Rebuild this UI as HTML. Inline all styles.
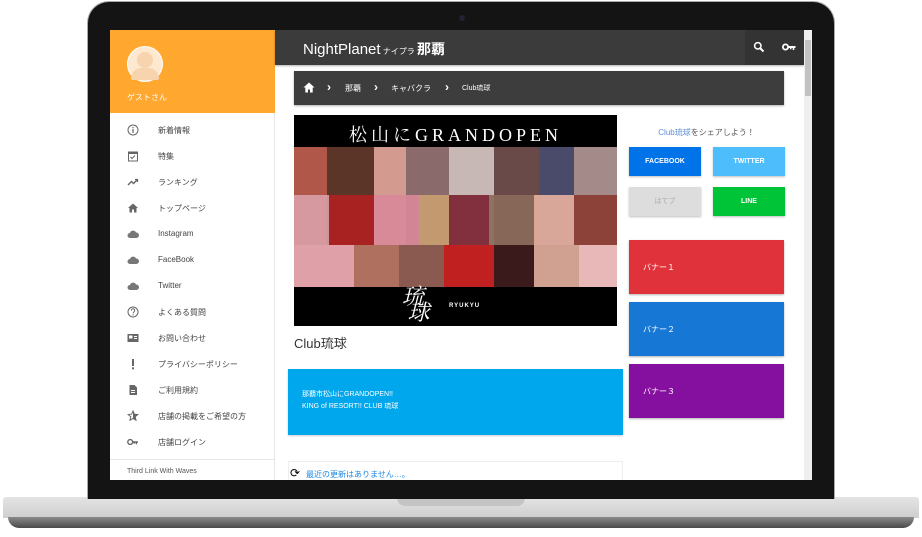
<!DOCTYPE html>
<html><head><meta charset="utf-8"><style>
*{margin:0;padding:0;box-sizing:border-box}
body{width:922px;height:537px;background:#fff;position:relative;overflow:hidden;font-family:"Liberation Sans","Noto Sans CJK JP",sans-serif}
.a{position:absolute}
.mi{position:absolute;left:0;width:165px;height:26px;font-size:8px;color:#444}
.mi span{position:absolute;left:48px;top:8px}
.mi svg{position:absolute;left:17px;top:7px;width:12px;height:12px}
.btn{position:absolute;width:72px;height:29px;color:#fff;font-size:7px;font-weight:bold;text-align:center;line-height:29px;box-shadow:0 1px 2px rgba(0,0,0,.25)}
.bn{position:absolute;left:629px;width:155px;height:54px;color:#fff;font-size:8px;padding:22px 0 0 14px;box-shadow:0 1px 2px rgba(0,0,0,.3)}
.ch{position:absolute;top:9px;font-size:12px;font-weight:bold}
</style></head><body>
<div class="a" style="left:3px;top:497px;width:916px;height:21px;background:linear-gradient(#e4e4e4,#cfcfcf);border-radius:3px 3px 0 0"></div>
<div class="a" style="left:8px;top:517px;width:906px;height:11px;background:linear-gradient(#8a8a8a,#4a4a4a);border-radius:0 0 40px 40px"></div>
<div class="a" style="left:397px;top:497px;width:128px;height:9px;background:#c4c4c4;border-radius:0 0 8px 8px"></div>
<div class="a" style="left:87px;top:1px;width:748px;height:498px;background:#141414;border-radius:22px 22px 0 0;border:1px solid #aaa;border-bottom:none"></div>
<div class="a" style="left:459px;top:15px;width:6px;height:6px;border-radius:50%;background:#223"></div>
<div class="a" style="left:110px;top:30px;width:702px;height:450px;background:#fff;overflow:hidden">
 <div class="a" style="left:0;top:0;width:165px;height:450px;background:#fff;border-right:1px solid #e6e6e6">
  <div class="a" style="left:0;top:0;width:165px;height:83px;background:#ffa72e"></div>
  <div class="a" style="left:17px;top:16px;width:36px;height:36px;border-radius:50%;background:#fde9d0;border:1px solid #fff"></div>
  <div class="a" style="left:27px;top:22px;width:16px;height:16px;border-radius:50%;background:#f7d3ae"></div>
  <div class="a" style="left:21px;top:38px;width:28px;height:12px;border-radius:12px 12px 2px 2px;background:#f7d3ae"></div>
  <div class="a" style="left:17px;top:62px;font-size:8px;color:#fff">ゲストさん</div>
  <div class="mi" style="top:87px"><svg viewBox="0 0 12 12"><circle cx="6" cy="6" r="5" fill="none" stroke="#666"/><rect x="5.4" y="5" width="1.2" height="4" fill="#666"/><rect x="5.4" y="3" width="1.2" height="1.2" fill="#666"/></svg><span>新着情報</span></div>
  <div class="mi" style="top:113px"><svg viewBox="0 0 12 12"><rect x="1.5" y="2" width="9" height="9" fill="none" stroke="#666"/><rect x="1.5" y="2" width="9" height="2" fill="#666"/><path d="M3.5 7l1.5 1.5 3-3" fill="none" stroke="#666"/></svg><span>特集</span></div>
  <div class="mi" style="top:139px"><svg viewBox="0 0 12 12"><path d="M1 9l3.5-3.5 2 2L10 4" fill="none" stroke="#666" stroke-width="1.4"/><path d="M8 3.5h2.5V6" fill="none" stroke="#666" stroke-width="1.2"/></svg><span>ランキング</span></div>
  <div class="mi" style="top:165px"><svg viewBox="0 0 12 12"><path d="M6 1.5L1 6h1.5v4.5h2.5v-3h2v3h2.5V6H11z" fill="#666"/></svg><span>トップページ</span></div>
  <div class="mi" style="top:191px"><svg viewBox="0 0 12 12"><path d="M3 10a2.5 2.5 0 010-5 3.2 3.2 0 016-.5A2.6 2.6 0 019.5 10z" fill="#777"/></svg><span>Instagram</span></div>
  <div class="mi" style="top:217px"><svg viewBox="0 0 12 12"><path d="M3 10a2.5 2.5 0 010-5 3.2 3.2 0 016-.5A2.6 2.6 0 019.5 10z" fill="#777"/></svg><span>FaceBook</span></div>
  <div class="mi" style="top:243px"><svg viewBox="0 0 12 12"><path d="M3 10a2.5 2.5 0 010-5 3.2 3.2 0 016-.5A2.6 2.6 0 019.5 10z" fill="#777"/></svg><span>Twitter</span></div>
  <div class="mi" style="top:269px"><svg viewBox="0 0 12 12"><circle cx="6" cy="6" r="5" fill="none" stroke="#666"/><path d="M4.3 4.6a1.7 1.7 0 113 1c-.8.6-1.2.8-1.2 1.8" fill="none" stroke="#666"/><rect x="5.5" y="8.3" width="1.1" height="1.1" fill="#666"/></svg><span>よくある質問</span></div>
  <div class="mi" style="top:295px"><svg viewBox="0 0 12 12"><rect x="0.5" y="2" width="11" height="8" fill="#666"/><rect x="2" y="3.5" width="3.5" height="3" fill="#fff"/><rect x="7" y="4" width="3" height="1" fill="#fff"/><rect x="7" y="6" width="3" height="1" fill="#fff"/></svg><span>お問い合わせ</span></div>
  <div class="mi" style="top:321px"><svg viewBox="0 0 12 12"><rect x="5" y="1" width="2" height="7" fill="#666"/><rect x="5" y="9.3" width="2" height="2" fill="#666"/></svg><span>プライバシーポリシー</span></div>
  <div class="mi" style="top:347px"><svg viewBox="0 0 12 12"><path d="M2.5 1h5l2.5 2.5V11h-7.5z" fill="#666"/><rect x="4" y="6" width="4" height="1" fill="#fff"/><rect x="4" y="8" width="4" height="1" fill="#fff"/></svg><span>ご利用規約</span></div>
  <div class="mi" style="top:373px"><svg viewBox="0 0 12 12"><path d="M6 1l1.4 3.2 3.4.3-2.6 2.3.8 3.4L6 8.4 3 10.2l.8-3.4L1.2 4.5l3.4-.3z" fill="none" stroke="#666"/><path d="M6 1l1.4 3.2 3.4.3-2.6 2.3.8 3.4L6 8.4z" fill="#666"/></svg><span>店舗の掲載をご希望の方</span></div>
  <div class="mi" style="top:399px"><svg viewBox="0 0 12 12"><circle cx="3.2" cy="6" r="2.4" fill="none" stroke="#666" stroke-width="1.4"/><path d="M5.5 5.3h5.5v1.4h-1v1.5H8.7V6.7H7.8v1H6.6V6.7H5.5z" fill="#666"/></svg><span>店舗ログイン</span></div>
  <div class="a" style="left:0;top:429px;width:165px;height:1px;background:#e6e6e6"></div>
  <div class="a" style="left:17px;top:438px;font-size:7px;color:#555">Third Link With Waves</div>
 </div>
 <div class="a" style="left:165px;top:0;width:529px;height:35px;background:#3b3b3b;box-shadow:0 1px 2px rgba(0,0,0,.3)"></div>
 <div class="a" style="left:635px;top:0;width:59px;height:35px;background:#333"></div>
 <div class="a" style="left:193px;top:9px;color:#fff;font-size:15px">NightPlanet<span style="font-size:8px"> ナイプラ </span><b style="font-size:14px">那覇</b></div>
 <svg class="a" style="left:643px;top:11px" width="12" height="12" viewBox="0 0 12 12"><circle cx="4.8" cy="4.8" r="3.2" fill="none" stroke="#fff" stroke-width="1.5"/><path d="M7 7l3.5 3.5" stroke="#fff" stroke-width="2"/></svg>
 <svg class="a" style="left:672px;top:12px" width="14" height="10" viewBox="0 0 14 10"><circle cx="3.5" cy="5" r="2.6" fill="none" stroke="#fff" stroke-width="1.8"/><path d="M6 4h7.5v2h-1.2v2h-1.6V6H9.5v1.3H8V6H6z" fill="#fff"/></svg>
 <div class="a" style="left:694px;top:0;width:8px;height:450px;background:#efefef"></div>
 <div class="a" style="left:695px;top:10px;width:6px;height:56px;background:#c2c2c2"></div>
 <div class="a" style="left:184px;top:41px;width:490px;height:34px;background:#3d3d3d;box-shadow:0 1px 2px rgba(0,0,0,.3);color:#fff;font-size:8px">
  <svg class="a" style="left:9px;top:11px" width="12" height="11" viewBox="0 0 12 11"><path d="M6 0.5L0.5 5.5h1.8V10.5h2.7V7.5h2v3h2.7V5.5h1.8z" fill="#fff"/></svg>
  <span class="ch" style="left:33px">›</span>
  <span class="a" style="left:51px;top:12px">那覇</span>
  <span class="ch" style="left:80px">›</span>
  <span class="a" style="left:97px;top:12px">キャバクラ</span>
  <span class="ch" style="left:151px">›</span>
  <span class="a" style="left:168px;top:12px;font-size:7px">Club琉球</span>
 </div>
 <div class="a" style="left:184px;top:85px;width:323px;height:211px;background:#000;overflow:hidden">
  <div class="a" style="left:0;top:6px;width:323px;text-align:center;color:#fff;font-family:'Liberation Serif','Noto Serif CJK SC',serif;font-size:18px;letter-spacing:4px">松山にGRANDOPEN</div>
  <div class="a" style="left:0;top:32px;width:323px;height:140px;background:
   linear-gradient(90deg,#b0574a 0 33px,#5a3528 33px 80px,#d39a90 80px 112px,#8a6a6a 112px 155px,#c7b8b6 155px 200px,#6a4a48 200px 245px,#4a4a6a 245px 280px,#a58a8a 280px 323px)"></div>
  <div class="a" style="left:0;top:80px;width:323px;height:50px;background:linear-gradient(90deg,#d9a0a8 0 35px,#b02020 35px 80px,#d9889a 80px 125px,#c9a070 125px 155px,#7a2030 155px 195px,#8a6a5a 195px 240px,#e9b0a0 240px 280px,#8a3a30 280px 323px);opacity:.9"></div>
  <div class="a" style="left:0;top:130px;width:323px;height:42px;background:linear-gradient(90deg,#e0a0a8 0 60px,#b07060 60px 105px,#8a5a50 105px 150px,#c02020 150px 200px,#3a1a1a 200px 240px,#d0a090 240px 285px,#e8b8b8 285px 323px)"></div>
  <div class="a" style="left:108px;top:174px;color:#fff;font-family:'Liberation Serif','Noto Serif CJK SC',serif;font-size:22px;font-style:italic;line-height:16px;width:40px">琉<br>&nbsp;球</div>
  <div class="a" style="left:155px;top:188px;color:#fff;font-size:6px;font-weight:bold;letter-spacing:1px">RYUKYU</div>
 </div>
 <div class="a" style="left:184px;top:303px;font-size:13px;color:#333">Club琉球</div>
 <div class="a" style="left:178px;top:339px;width:335px;height:66px;background:#00a7ed;box-shadow:0 1px 2px rgba(0,0,0,.2);color:#fff;font-size:7px;line-height:12px;padding:20px 0 0 14px">那覇市松山にGRANDOPEN!!<br>KING of RESORT!! CLUB 琉球</div>
 <div class="a" style="left:178px;top:431px;width:335px;height:30px;border:1px solid #eee;font-size:8px;color:#1e88e5;padding:7px 0 0 17px">最近の更新はありません…。</div>
 <div class="a" style="left:180px;top:436px;font-size:12px;color:#000">⟳</div>
 <div class="a" style="left:519px;top:97px;width:155px;text-align:center;font-size:8px;color:#555"><span style="color:#5b8fd6">Club琉球</span>をシェアしよう！</div>
 <div class="btn" style="left:519px;top:117px;background:#0073e9">FACEBOOK</div>
 <div class="btn" style="left:603px;top:117px;background:#4dbdfc">TWITTER</div>
 <div class="btn" style="left:519px;top:157px;background:#ddd;color:#aaa;font-weight:normal">はてブ</div>
 <div class="btn" style="left:603px;top:157px;background:#00c437">LINE</div>
 <div class="bn" style="left:519px;top:210px;background:#e0323a">バナー１</div>
 <div class="bn" style="left:519px;top:272px;background:#1777d4">バナー２</div>
 <div class="bn" style="left:519px;top:334px;background:#850f9e">バナー３</div>
</div>
</body></html>
